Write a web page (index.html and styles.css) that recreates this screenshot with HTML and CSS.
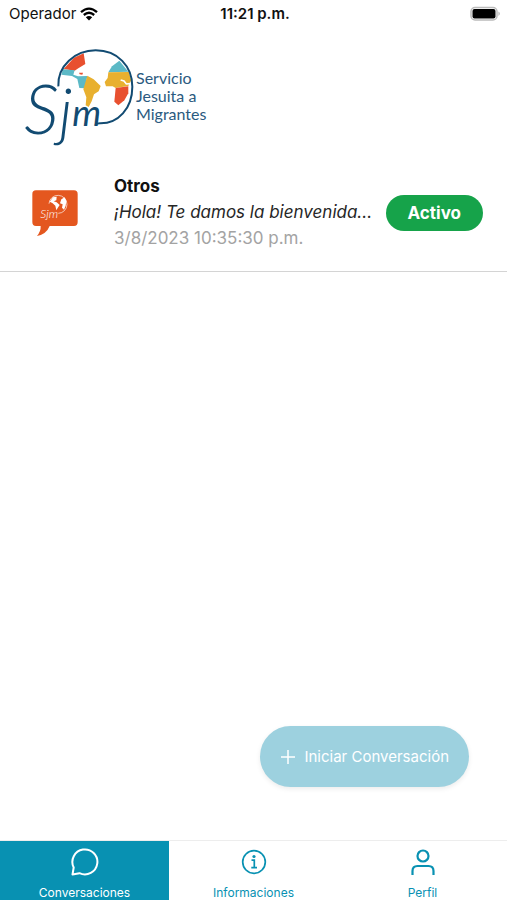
FILE: index.html
```html
<!DOCTYPE html>
<html lang="es">
<head>
    <meta charset="UTF-8">
    <meta name="viewport" content="width=device-width, initial-scale=1.0">
    <title>Conversaciones</title>
    <link rel="stylesheet" href="styles.css">
</head>
<body>
    <div class="status-bar">
        <div class="carrier">
            <span>Operador</span>
            <svg class="wifi" viewBox="0 0 18 14" aria-hidden="true">
                <path d="M1 5.2Q9-2 17 5.2M3.800 8Q9 3.600 14.200 8" fill="none" stroke="#000" stroke-width="2.300"/>
                <path d="M9 13.500L5.800 10.300Q9 7.600 12.200 10.300Z" fill="#000"/>
            </svg>
        </div>
        <span class="clock">11:21 p.m.</span>
        <svg class="battery" viewBox="0 0 32 16" aria-hidden="true">
            <rect x="2" y="1.500" width="26" height="12.500" rx="4" fill="#fff" stroke="#bbb" stroke-width="1.500"/>
            <rect x="3.500" y="3" width="23" height="9.500" rx="2" fill="#000"/>
            <path d="M29.500 5.500Q32 7.700 29.500 10Z" fill="#aaa"/>
        </svg>
    </div>

    <header class="brand">
        <svg class="brand-logo" viewBox="24 20 330 330" role="img" aria-label="SJM">
            <!-- Globe -->
            <path d="M143 86L174 52L203 39L208 71L187 84L176 91Z" fill="#e8502f"/>
            <path d="M141 87L176 90L172 103L186 108L214 107L207 144L190 143L184 116L168 107L136 103Z" fill="#5cb9c6"/>
            <path d="M189 97L201 97L199 103L191 102Z" fill="#e8502f"/>
            <path d="M214 106L233 117L254 137L248 153L234 162L227 183L218 200L209 195L211 171L202 147Z" fill="#e8b02f"/>
            <path d="M310 61L337 94L277 96L288 78Z" fill="#5cb9c6"/>
            <path d="M277 96L338 95L346 119L337 137L299 143L290 138L270 138L266 125L275 113Z" fill="#e8b02f"/>
            <path d="M299 143L337 138L337 159L325 180L307 195L295 184Z" fill="#e8502f"/>
            <path d="M314 119L324 122L331 131L342 130" fill="none" stroke="#fff" stroke-width="5"/>
            <path d="M127 138C124 77 177 30 239 30C305 30 349 78 349 139C349 205 306 250 252 249Q242 249 238 254" fill="none" stroke="#124b72" stroke-width="6"/>
            <!-- Signature -->
            <text class="signature" x="24" y="280"><tspan class="sig-s">S</tspan><tspan class="sig-j" dy="2">j</tspan><tspan class="sig-m" dy="-24">m</tspan></text>
        </svg>
        <p class="brand-name">Servicio<br>Jesuita a<br>Migrantes</p>
    </header>

    <main class="chats">
        <article class="chat">
            <svg class="avatar" viewBox="0 0 138 138" aria-hidden="true">
                <path d="M12 1H126Q137 1 137 12V96Q137 108 126 108H53Q43 133 15 138Q27 123 26 108H12Q1 108 1 96V12Q1 1 12 1Z" fill="#e4571f"/>
                <path d="M51 41A27 27 0 1 1 79 70" fill="none" stroke="#fff" stroke-width="2"/>
                <path d="M53 35L63 22L74 20L73 31L65 34L74 37L83 45L77 54L73 61L70 47L62 40ZM88 28L98 22L103 33L101 47L96 59L90 53L92 43L84 40Z" fill="#fff"/>
                <text class="signature light" x="25" y="84">Sjm</text>
            </svg>
            <div class="chat-text">
                <h2>Otros</h2>
                <p class="preview">¡Hola! Te damos la bienvenida...</p>
                <time>3/8/2023 10:35:30 p.m.</time>
            </div>
            <span class="badge">Activo</span>
        </article>
    </main>

    <button class="new-chat" type="button">
        <svg viewBox="0 0 16 16" aria-hidden="true">
            <path d="M8 1V15M1 8H15" fill="none" stroke="currentColor" stroke-width="1.500"/>
        </svg>
        <span>Iniciar Conversación</span>
    </button>

    <nav class="tabs">
        <a class="tab active" href="#conversaciones">
            <svg viewBox="0 0 30 30" aria-hidden="true">
                <path d="M2.500 27.500L3.700 20.500A12.500 12.500 0 1 1 9.500 26.200Z" fill="none" stroke="currentColor" stroke-width="2" stroke-linejoin="round"/>
            </svg>
            <span>Conversaciones</span>
        </a>
        <a class="tab" href="#informaciones">
            <svg viewBox="0 0 30 30" aria-hidden="true">
                <circle cx="15" cy="15" r="11.300" fill="none" stroke="currentColor" stroke-width="1.700"/>
                <circle cx="15" cy="9.500" r="1.600" fill="currentColor"/>
                <path d="M12.500 13.200H15.300V20.500M12.300 20.700H18" fill="none" stroke="currentColor" stroke-width="1.700"/>
            </svg>
            <span>Informaciones</span>
        </a>
        <a class="tab" href="#perfil">
            <svg viewBox="0 0 30 30" aria-hidden="true">
                <circle cx="15" cy="9" r="5.500" fill="none" stroke="currentColor" stroke-width="2.200"/>
                <path d="M4.500 28V24Q4.500 19 9.500 19H20.500Q25.500 19 25.500 24V28" fill="none" stroke="currentColor" stroke-width="2.200"/>
            </svg>
            <span>Perfil</span>
        </a>
    </nav>
</body>
</html>
```
FILE: styles.css
```css
* {
    box-sizing: border-box;
}
body {
    margin: 0;
    height: 100vh;
    display: flex;
    flex-direction: column;
    background-color: #fff;
    font-family: Inter, Roboto, sans-serif;
    color: #111;
    overflow: hidden;
}
h2, p {
    margin: 0;
}

/* Status bar */
.status-bar {
    display: grid;
    grid-template-columns: 1fr auto 1fr;
    align-items: center;
    height: 28px;
    padding: 0 6px 0 9px;
    font-size: 15px;
    line-height: 18px;
}
.carrier {
    display: flex;
    align-items: center;
    gap: 4px;
}
.wifi {
    width: 18px;
    height: 14px;
}
.clock {
    font-weight: 600;
}
.battery {
    width: 32px;
    height: 16px;
    justify-self: end;
}

/* Brand */
.brand {
    display: flex;
    align-items: center;
    padding: 19px 24px 15px;
}
.brand-logo {
    width: 110px;
    height: 110px;
    overflow: visible;
}
.signature {
    font-family: Lato, sans-serif;
    font-style: italic;
    font-weight: 300;
    fill: #124b72;
}
.signature.light {
    font-size: 36px;
    fill: #fff;
}
.sig-s {
    font-size: 210px;
}
.sig-j {
    font-size: 190px;
}
.sig-m {
    font-size: 110px;
    font-weight: 400;
}
.brand-name {
    margin-bottom: 12px;
    padding-left: 2px;
    font-family: Lato, sans-serif;
    font-size: 16px;
    line-height: 18px;
    color: #2b5a80;
}

/* Chat list */
.chats {
    flex: 1;
}
.chat {
    display: flex;
    align-items: center;
    padding: 2px 24px 20px 32px;
    border-bottom: 1px solid #d4d4d4;
}
.avatar {
    width: 46px;
    height: 46px;
    margin-right: 36px;
}
.chat-text {
    flex: 1;
    min-width: 0;
    font-size: 17px;
    line-height: 26px;
    white-space: nowrap;
}
.chat-text h2 {
    font-size: 17px;
    font-weight: 700;
    line-height: 25px;
}
.preview {
    font-style: italic;
    color: #262626;
}
.chat-text time {
    display: block;
    color: #a3a3a3;
}
.badge {
    padding: 6px 22px;
    border-radius: 18px;
    background-color: #16a34a;
    color: #fff;
    font-size: 17px;
    font-weight: 700;
    line-height: 24px;
}

/* Floating action */
.new-chat {
    display: flex;
    align-items: center;
    align-self: flex-end;
    gap: 8px;
    height: 61px;
    margin: 0 38px 53px 0;
    padding: 0 20px;
    border: 0;
    border-radius: 31px;
    background-color: #9dd1df;
    box-shadow: 0 2px 5px rgba(0, 0, 0, 0.08);
    color: #fff;
    font-family: inherit;
    font-size: 15px;
}
.new-chat svg {
    width: 16px;
    height: 16px;
}

/* Tabs */
.tabs {
    display: grid;
    grid-template-columns: repeat(3, 1fr);
    height: 60px;
    border-top: 1px solid #ededed;
}
.tab {
    display: flex;
    flex-direction: column;
    align-items: center;
    gap: 8px;
    padding-top: 6px;
    color: #0891b2;
    font-size: 12px;
    line-height: 16px;
    text-decoration: none;
}
.tab svg {
    width: 30px;
    height: 30px;
}
.tab.active {
    background-color: #0891b2;
    color: #fff;
}
```
